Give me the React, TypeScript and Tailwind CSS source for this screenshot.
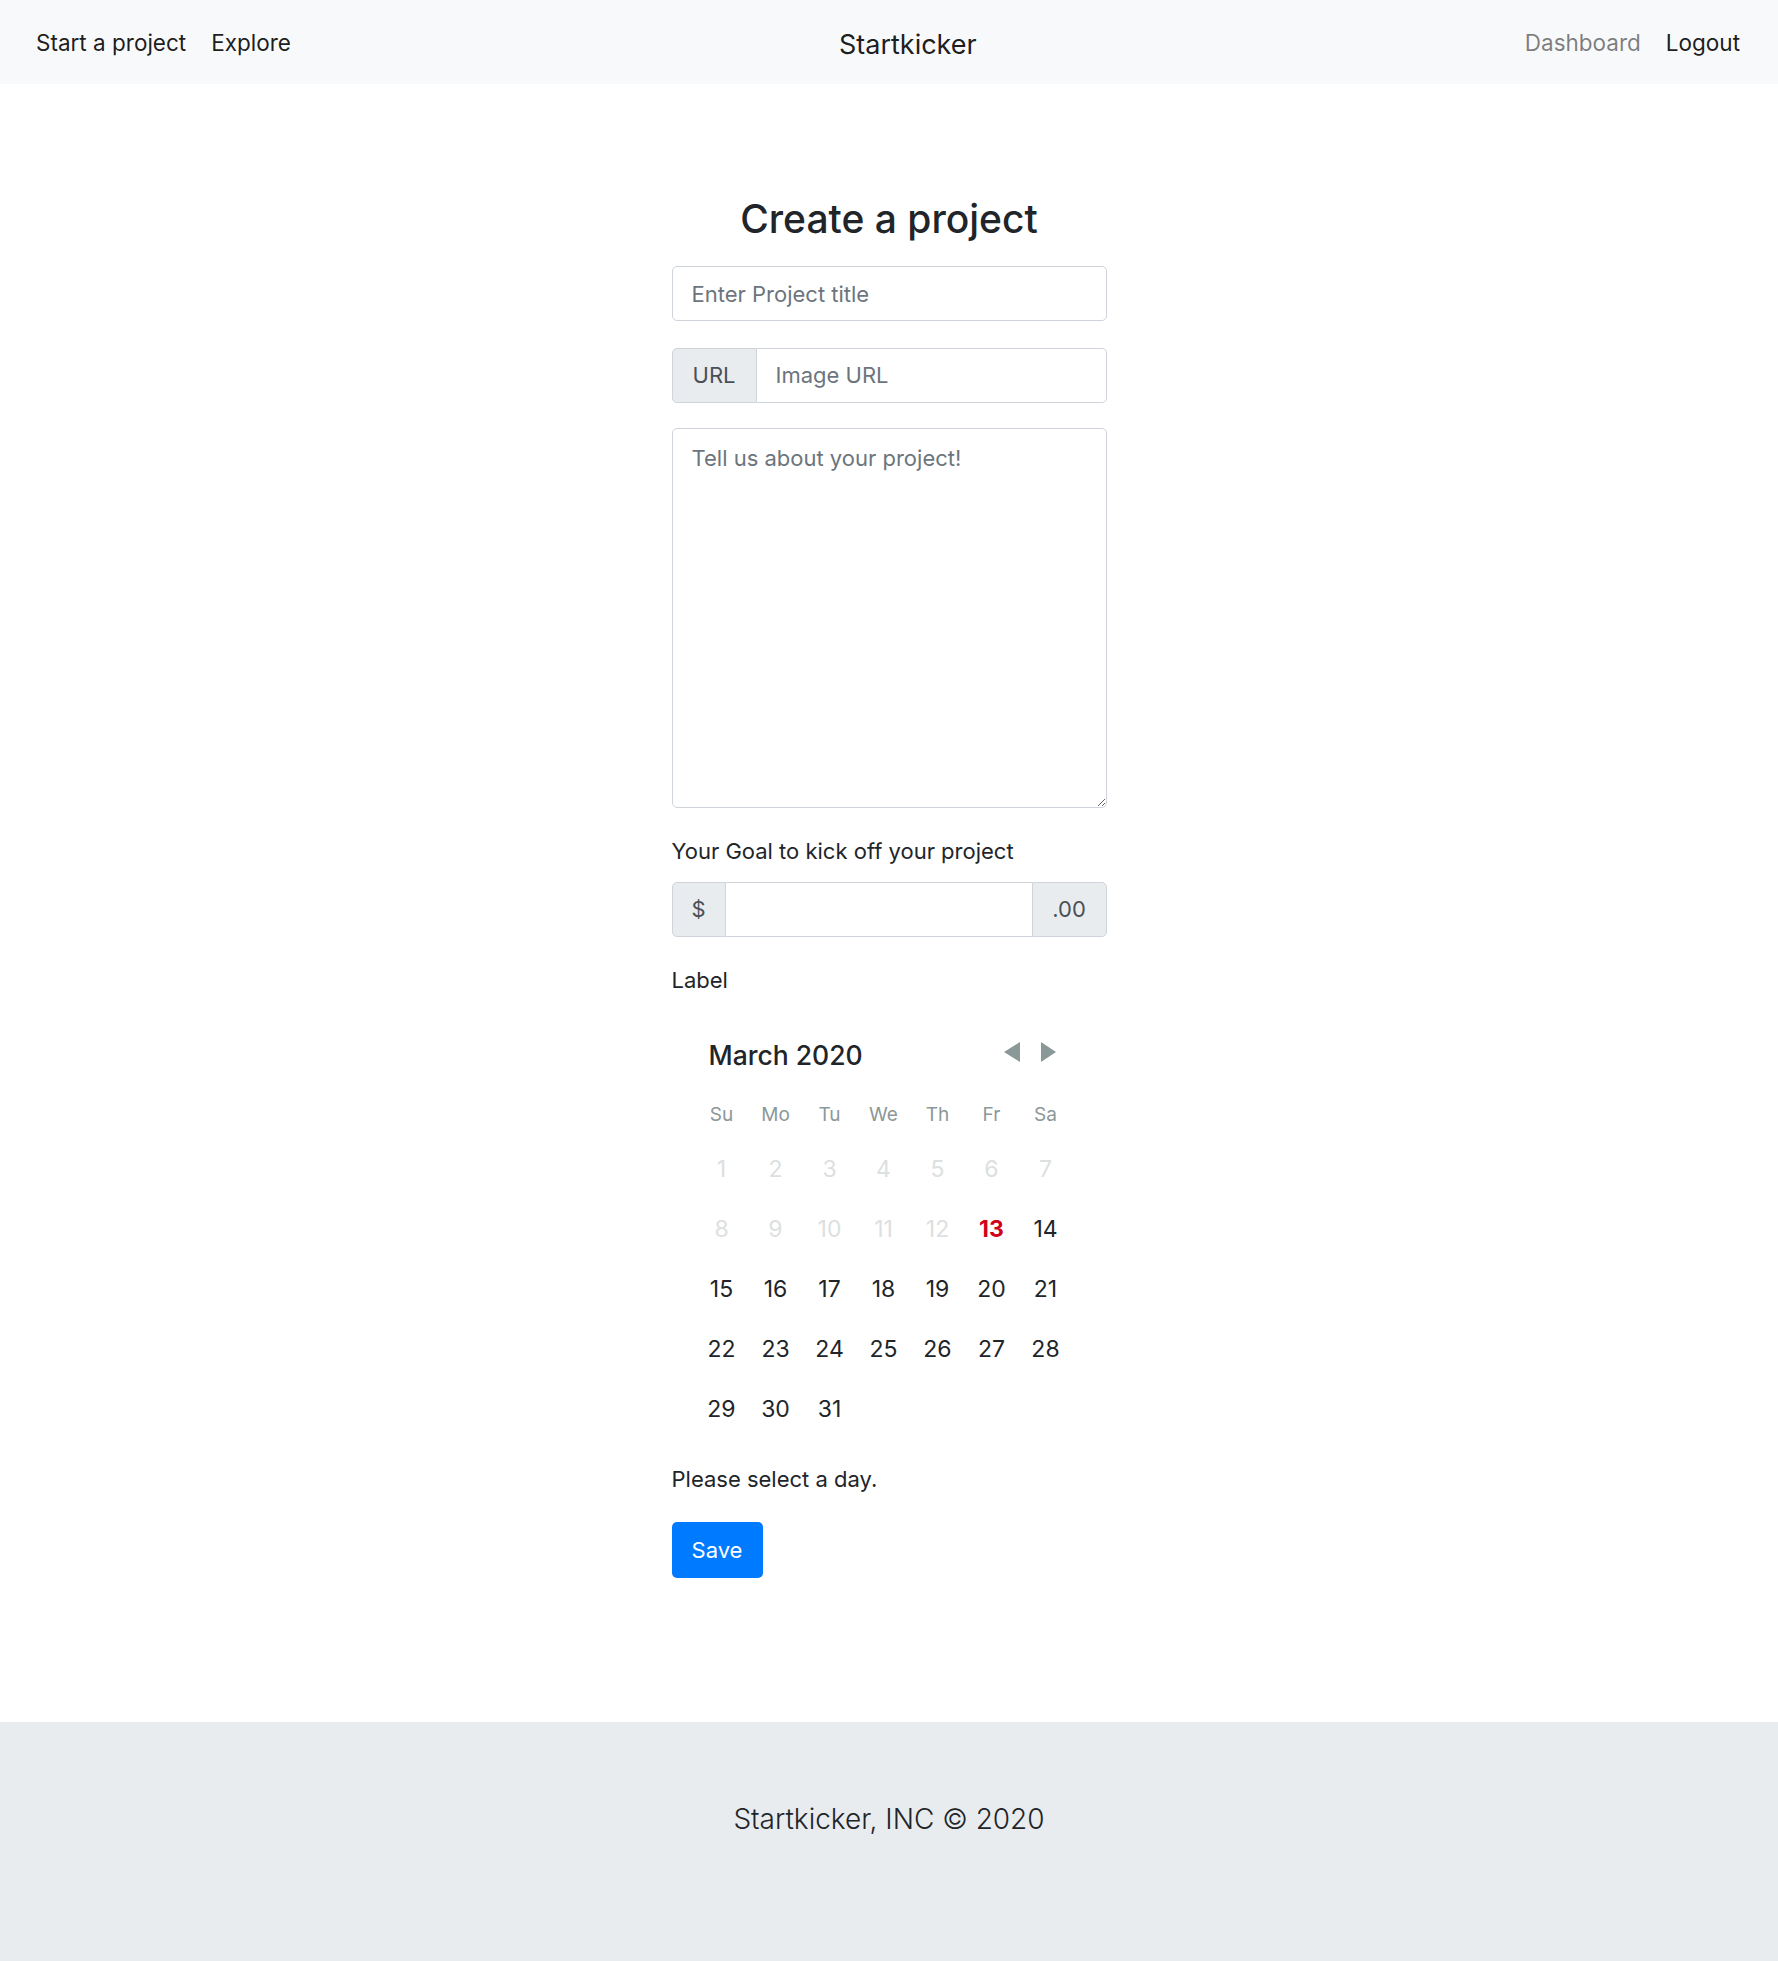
import React from 'react';

const weekdays = ['Su', 'Mo', 'Tu', 'We', 'Th', 'Fr', 'Sa'];

// March 2020 starts on a Sunday; days before the 13th are disabled
const weeks: number[][] = [
  [1, 2, 3, 4, 5, 6, 7],
  [8, 9, 10, 11, 12, 13, 14],
  [15, 16, 17, 18, 19, 20, 21],
  [22, 23, 24, 25, 26, 27, 28],
  [29, 30, 31],
];

const TODAY = 13;

function Navbar() {
  return (
    <nav className="h-[84px] bg-[#f8f9fa] flex items-center justify-between pl-[36px] pr-[38px] pt-[2px]">
      <div className="flex items-center gap-[25px] text-[22.5px] text-[rgba(0,0,0,0.9)]">
        <a href="#">Start a project</a>
        <a href="#">Explore</a>
      </div>
      <a href="#" className="mt-[5px] text-[27px] text-[rgba(0,0,0,0.9)]">Startkicker</a>
      <div className="flex items-center gap-[25px] text-[22.5px]">
        <a href="#" className="text-[rgba(0,0,0,0.5)]">Dashboard</a>
        <a href="#" className="text-[rgba(0,0,0,0.9)]">Logout</a>
      </div>
    </nav>
  );
}

function DayCell({ day }: { day: number }) {
  let color = 'text-[#212529]';
  if (day < TODAY) color = 'text-[#dce0e0]';
  if (day === TODAY) color = 'text-[#d0021b] font-bold';
  return (
    <div className={`h-[60px] flex items-center justify-center text-[23px] ${color}`}>{day}</div>
  );
}

function Calendar() {
  return (
    <div className="mt-[43px] ml-[23px] w-[378px]">
      <div className="h-[34px] flex items-center justify-between pl-[14px] pr-[17px]">
        <div className="mt-[2px] text-[26.5px] font-medium text-[#212529]">March 2020</div>
        <div className="flex items-center gap-[21px] -mt-[6px]">
          <button aria-label="Previous month">
            <svg width="16" height="20" viewBox="0 0 16 20">
              <polygon points="16,0 16,20 0,10" fill="#8b9898" />
            </svg>
          </button>
          <button aria-label="Next month">
            <svg width="15" height="20" viewBox="0 0 15 20">
              <polygon points="0,0 0,20 15,10" fill="#8b9898" />
            </svg>
          </button>
        </div>
      </div>
      <div className="mt-[23px] grid grid-cols-7 h-[40px] items-center">
        {weekdays.map(w => (
          <div key={w} className="text-center text-[19px] text-[#8b9898]">{w}</div>
        ))}
      </div>
      <div className="mt-[4px]">
        {weeks.map((week, i) => (
          <div key={i} className="grid grid-cols-7">
            {week.map(d => <DayCell key={d} day={d} />)}
          </div>
        ))}
      </div>
    </div>
  );
}

export default function App() {
  return (
    <div className="min-h-[1961px] flex flex-col bg-white text-[#212529]" style={{ fontFamily: 'Inter, "Noto Sans", sans-serif' }}>
      <Navbar />

      <main className="flex-1 w-[435px] mx-auto pt-[112px]">
        <h1 className="text-[39px] leading-[46px] font-medium text-center">Create a project</h1>

        <input
          type="text"
          placeholder="Enter Project title"
          className="mt-[24px] block w-full h-[55px] px-[19px] text-[22px] border border-[#ced4da] rounded-[5px] placeholder-[#6c757d] text-[#495057] outline-none"
        />

        <div className="mt-[27px] flex h-[55px]">
          <span className="w-[85px] flex items-center justify-center text-[22px] text-[#495057] bg-[#e9ecef] border border-[#ced4da] rounded-l-[5px]">
            URL
          </span>
          <input
            type="text"
            placeholder="Image URL"
            className="flex-1 min-w-0 px-[19px] text-[22px] border border-l-0 border-[#ced4da] rounded-r-[5px] placeholder-[#6c757d] text-[#495057] outline-none"
          />
        </div>

        <textarea
          placeholder="Tell us about your project!"
          className="mt-[25px] block w-full h-[380px] px-[19px] pt-[13px] text-[22px] leading-[33px] border border-[#ced4da] rounded-[5px] placeholder-[#6c757d] text-[#495057] outline-none"
        />

        <label className="mt-[28px] block text-[22px] leading-[30px]">Your Goal to kick off your project</label>

        <div className="mt-[16px] flex h-[55px]">
          <span className="w-[54px] flex items-center justify-center text-[22px] text-[#495057] bg-[#e9ecef] border border-[#ced4da] rounded-l-[5px]">
            $
          </span>
          <input
            type="text"
            className="flex-1 min-w-0 px-[19px] text-[22px] border-y border-[#ced4da] text-[#495057] outline-none"
          />
          <span className="w-[75px] flex items-center justify-center text-[22px] text-[#495057] bg-[#e9ecef] border border-[#ced4da] rounded-r-[5px]">
            .00
          </span>
        </div>

        <div className="mt-[28px] text-[22px] leading-[30px]">Label</div>

        <Calendar />

        <p className="mt-[25px] text-[22px] leading-[30px]">Please select a day.</p>

        <button className="mt-[28px] w-[91px] h-[56px] bg-[#007bff] text-white text-[22px] rounded-[5px]">
          Save
        </button>
      </main>

      <footer className="mt-[143px] h-[239px] bg-[#e9ecef] pt-[77px] text-center">
        <p className="text-[28px] leading-[40px] font-light text-[#212529]">Startkicker, INC © 2020</p>
      </footer>
    </div>
  );
}
